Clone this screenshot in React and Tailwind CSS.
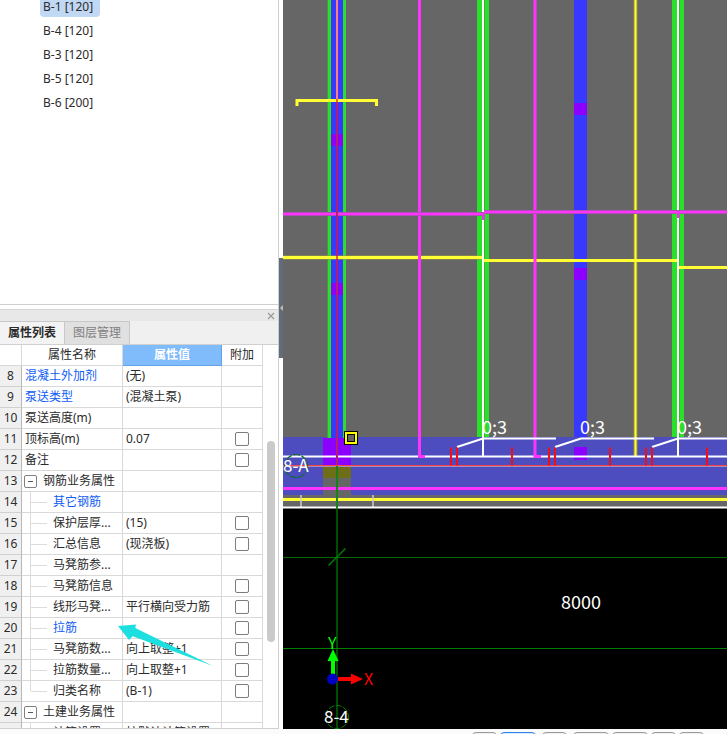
import React from "react";

const components = ["B-1 [120]", "B-4 [120]", "B-3 [120]", "B-5 [120]", "B-6 [200]"];

const rows = [
  { n: 8, name: "混凝土外加剂", value: "(无)", link: true },
  { n: 9, name: "泵送类型", value: "(混凝土泵)", link: true },
  { n: 10, name: "泵送高度(m)" },
  { n: 11, name: "顶标高(m)", value: "0.07", check: true },
  { n: 12, name: "备注", check: true },
  { n: 13, name: "钢筋业务属性", group: true },
  { n: 14, name: "其它钢筋", child: true, link: true },
  { n: 15, name: "保护层厚...", value: "(15)", child: true, check: true },
  { n: 16, name: "汇总信息", value: "(现浇板)", child: true, check: true },
  { n: 17, name: "马凳筋参...", child: true },
  { n: 18, name: "马凳筋信息", child: true, check: true },
  { n: 19, name: "线形马凳...", value: "平行横向受力筋", child: true, check: true },
  { n: 20, name: "拉筋", child: true, link: true, check: true },
  { n: 21, name: "马凳筋数...", value: "向上取整+1", child: true, check: true },
  { n: 22, name: "拉筋数量...", value: "向上取整+1", child: true, check: true },
  { n: 23, name: "归类名称", value: "(B-1)", child: true, last: true, check: true },
  { n: 24, name: "土建业务属性", group: true },
  { n: 25, name: "计算设置", value: "按默认计算设置", child: true },
];

function NameCell({ row }) {
  const color = row.link ? "text-[#0f5cf5]" : "text-[#2b2b2b]";
  if (row.group) {
    return (
      <div className="flex h-5 items-center pl-0.5">
        <button
          aria-label={row.name}
          className="flex h-[13px] w-[13px] items-center justify-center rounded-xs border border-[#808080] bg-white"
        >
          <span className="h-px w-[5px] bg-[#555]" />
        </button>
        <span className="ml-1.5">{row.name}</span>
      </div>
    );
  }
  if (row.child) {
    return (
      <div className="flex h-5 items-center pl-2">
        <span className={`w-px bg-[#dcdcdc] ${row.last ? "h-2.5 self-start" : "h-5"}`} />
        <span className="h-px w-4 bg-[#dcdcdc]" />
        <span className={`ml-1.5 whitespace-nowrap ${color}`}>{row.name}</span>
      </div>
    );
  }
  return <div className={`h-5 whitespace-nowrap pl-[3px] ${color}`}>{row.name}</div>;
}

function PropertyTable() {
  const cell = "border-r border-b border-[#d9d9d9] p-0";
  return (
    <table className="w-[263px] table-fixed border-separate border-spacing-0 text-[12px] leading-5">
      <colgroup>
        <col className="w-[22px]" />
        <col className="w-[101px]" />
        <col className="w-[99px]" />
        <col className="w-[41px]" />
      </colgroup>
      <thead>
        <tr>
          <th className={cell} />
          <th className={`${cell} font-normal`}>属性名称</th>
          <th className="border-r border-b border-[#62a2e8] bg-[#80bbfb] p-0 font-bold text-white">属性值</th>
          <th className={`${cell} font-normal`}>附加</th>
        </tr>
      </thead>
      <tbody>
        {rows.map((row) => (
          <tr key={row.n}>
            <td className="border-r border-b border-r-[#b8b8b8] border-b-[#d0d0d0] bg-[#f0f0f0] p-0 text-center">
              {row.n}
            </td>
            <td className={cell}>
              <NameCell row={row} />
            </td>
            <td className={`${cell} whitespace-nowrap`}>
              <div className="h-5 pl-[3px]">{row.value}</div>
            </td>
            <td className={cell}>
              {row.check && (
                <input
                  type="checkbox"
                  aria-label={row.name}
                  className="mx-auto block h-3.5 w-3.5 appearance-none rounded-xs border border-[#7c7c7c] bg-white"
                />
              )}
            </td>
          </tr>
        ))}
      </tbody>
    </table>
  );
}

function GreenBeam({ x }) {
  return (
    <g>
      <rect x={x} y="0" width="12" height="437" fill="#2be02b" />
      <rect x={x + 7} y="0" width="1" height="437" fill="#3fae3f" />
    </g>
  );
}

function RebarMark({ x }) {
  return (
    <g>
      <path d={`M${x - 26} 447L${x} 438.5H${x + 73}`} fill="none" stroke="#fff" strokeWidth="2" />
      <path d={`M${x - 32} 447.5v18M${x - 26} 447.5v18M${x + 29} 447.5v18`} stroke="#f20d18" strokeWidth="2" />
      <text x={x - 1} y="434" fontSize="18" fill="#fff">0;3</text>
    </g>
  );
}

function Drawing() {
  return (
    <svg
      className="block h-full w-full font-['Noto_Sans_CJK_SC',sans-serif]"
      role="img"
      aria-label="8-A / 8-4"
    >
      <g transform="translate(-283 0)">
        <rect x="283" y="0" width="3000" height="508" fill="#666" />
        <rect x="283" y="437" width="3000" height="58" fill="#4d4dc0" />

        <rect x="327" y="0" width="4" height="438" fill="#2be02b" />
        <rect x="327" y="0" width="1" height="438" fill="#4f914f" />
        <rect x="343" y="0" width="3" height="438" fill="#2be02b" />
        <rect x="331" y="0" width="12" height="438" fill="#3838ff" />
        <rect x="331" y="134" width="12" height="12" fill="#8c00ff" />
        <rect x="331" y="283" width="12" height="12" fill="#8c00ff" />
        <rect x="574" y="0" width="13" height="437" fill="#3838ff" />
        <rect x="574" y="103" width="13" height="12" fill="#8c00ff" />
        <rect x="574" y="268" width="13" height="12" fill="#8c00ff" />
        <rect x="574" y="447" width="13" height="13" fill="#8c00ff" />

        <rect x="323" y="438" width="28" height="27" fill="#8c00ff" />
        <rect x="323" y="465" width="28" height="13" fill="#6e6e18" />
        <rect x="323" y="478" width="28" height="17" fill="#666" />

        <GreenBeam x={477} />
        <GreenBeam x={672} />
        <path d="M635.5 0V456" stroke="#8f8f3d" strokeWidth="4" />
        <path d="M635.5 0V456" stroke="#ffff33" strokeWidth="2" />
        <path d="M283 257.5H483" stroke="#99993a" strokeWidth="4" />
        <path d="M283 257.5H483M483 260.5H678M678 267.5H3000" stroke="#ffff33" strokeWidth="3" />
        <path d="M483 0V456M678 0V456" stroke="#fff" strokeWidth="2" />

        <path d="M283 456.5H3000" stroke="#fff" strokeWidth="2" />
        <path d="M283 466H3000" stroke="#a98bbd" strokeWidth="2" />
        <path d="M283 465.5H3000" stroke="#f24646" strokeWidth="1" />
        <path d="M419.5 0V456.5H425M535 0V456.5H541" fill="none" stroke="#ff33ff" strokeWidth="3" />
        <path d="M283 214H484M484 212H3000" stroke="#b34db3" strokeWidth="4" />
        <path d="M283 214H484M484 212H3000" stroke="#ff33ff" strokeWidth="2" />
        <path d="M483.5 213V220M678.5 211V218" stroke="#e03be0" strokeWidth="3" />
        <path d="M283 488.5H3000" stroke="#ff33ff" strokeWidth="3" />
        <path d="M283 499.5H3000" stroke="#ffff33" strokeWidth="3" />
        <path d="M301 495V507M373 495V507" stroke="#ccc" strokeWidth="1.5" />
        <path d="M283 507.5H3000" stroke="#fff" strokeWidth="2" />

        <path d="M297 106V100.5H376.5V106" fill="none" stroke="#ffff33" strokeWidth="3" />
        <path d="M337 0V99" stroke="#ff8080" strokeWidth="2" />
        <path d="M337 99V465" stroke="#b31f70" strokeWidth="2" />
        <path d="M337 99V102M337 256V259" stroke="#e66b20" strokeWidth="2" />

        <RebarMark x={483} />
        <RebarMark x={581} />
        <RebarMark x={678} />

        <rect x="344.5" y="431.5" width="13" height="13" fill="#ffff00" stroke="#000" />
        <rect x="347.5" y="434.5" width="7" height="7" fill="#666" stroke="#000" />

        <path d="M337 466V509" stroke="#1a801a" strokeWidth="2" />
        <path d="M337 509V729" stroke="#004d00" strokeWidth="2" />
        <path d="M283 557.5H3000" stroke="#006b00" />
        <path d="M283 648.5H3000" stroke="#008000" />
        <path d="M328.5 565.5L345.5 548.5" stroke="#008000" strokeWidth="1.5" />

        <circle cx="296" cy="466" r="11.5" fill="none" stroke="#0b6b28" strokeWidth="1.2" strokeDasharray="7 1.5" />
        <text x="283" y="472" fontSize="17" fill="#fff">8-A</text>
        <text x="561" y="609" fontSize="18" fill="#fff">8000</text>

        <path d="M331 661h4v13h-4z" fill="#0f0" />
        <path d="M333 649L338.5 661H327.5z" fill="#0f0" />
        <path d="M338 677h13v4h-13z" fill="#f00" />
        <path d="M363 679L351 673.5V684.5z" fill="#f00" />
        <circle cx="332.5" cy="679" r="5.5" fill="#0000c0" />
        <text x="328" y="649" fontSize="16" fill="#0f0">Y</text>
        <text x="364" y="685" fontSize="16" fill="#f00">X</text>
        <circle cx="337" cy="717" r="11.5" fill="none" stroke="#008000" strokeDasharray="6 1.5" />
        <text x="324" y="723" fontSize="17" fill="#fff">8-4</text>
      </g>
    </svg>
  );
}

const toolWidths = [
  "w-[25px]",
  "w-9 ml-[3px]",
  "w-[25px] ml-1.5",
  "w-9 ml-1.5",
  "w-9 ml-[3px]",
  "w-[25px] ml-[3px]",
  "w-[25px] ml-[3px]",
];

export default function App() {
  return (
    <div className="flex h-screen flex-col overflow-hidden bg-[#fbfbfb] font-['Noto_Sans','Noto_Sans_CJK_SC',sans-serif] text-[#2b2b2b]">
      <div className="flex min-h-0 flex-1">
        <aside className="relative flex w-[279px] shrink-0 flex-col overflow-hidden border-r border-b border-[#d0d0d0] bg-white">
          <ul className="h-[305px] shrink-0 border-b border-[#cfcfcf] pl-10 text-[12px] leading-6">
            {components.map((name, i) => (
              <li key={name} className={i === 0 ? "h-[19px]" : "h-6"}>
                {i === 0 ? (
                  <span className="block h-[17px] w-[60px] rounded-b bg-[#c0d8f3] pl-[3px] leading-[13px]">{name}</span>
                ) : (
                  <span className="block pl-[3px]">{name}</span>
                )}
              </li>
            ))}
          </ul>
          <div className="mt-1 flex h-3 shrink-0 items-center justify-end border-t border-[#d6d6d6] bg-[#e8e8e8] pr-[3px]">
            <button aria-label="关闭" className="h-2 w-2">
              <svg className="h-2 w-2" viewBox="0 0 8 8">
                <path d="M1 1L7 7M7 1L1 7" stroke="#999" strokeWidth="1.2" />
              </svg>
            </button>
          </div>
          <div role="tablist" className="flex h-[23px] shrink-0 bg-[#f0f0f0] text-[12px] leading-[22px]">
            <button role="tab" aria-selected="true" className="w-[65px] border-t border-r border-[#c8c8c8] bg-[#f3f3f3] font-bold">
              属性列表
            </button>
            <button role="tab" aria-selected="false" className="w-[65px] border-t border-r border-[#c8c8c8] bg-[#e0e0e0] text-[#808080]">
              图层管理
            </button>
          </div>
          <div className="flex min-h-0 flex-1 overflow-hidden border-t border-[#cfcfcf]">
            <PropertyTable />
            <div className="ml-1 w-2 pt-24">
              <div className="h-[201px] w-2 rounded-full bg-[#cacaca]" />
            </div>
          </div>
          <svg className="absolute top-[624px] left-[118px] h-[43px] w-[96px]" viewBox="0 0 96 43">
            <path d="M0 2L18 0.500L17.300 4L95 42L14.700 12.300L11 16z" fill="#1edfe0" />
          </svg>
        </aside>
        <div className="w-1 shrink-0 bg-white pt-[258px]">
          <button aria-label="折叠" className="flex h-[100px] w-1 items-center justify-center bg-[#606c78]">
            <svg className="h-1.5 w-1" viewBox="0 0 4 6">
              <path d="M4 0V6L1 3z" fill="#bbb" />
            </svg>
          </button>
        </div>
        <main className="min-w-0 flex-1 overflow-hidden bg-black">
          <Drawing />
        </main>
      </div>
      <div className="flex h-[5px] shrink-0 overflow-hidden pt-[3px] pl-[472px]">
        {toolWidths.map((width, i) => (
          <button
            key={i}
            aria-label={`工具 ${i + 1}`}
            className={`h-5 shrink-0 rounded-sm border ${width} ${i === 1 ? "border-[#3485e8] bg-[#d5e8ff]" : "border-[#999] bg-[#f0f0f0]"}`}
          />
        ))}
      </div>
    </div>
  );
}
